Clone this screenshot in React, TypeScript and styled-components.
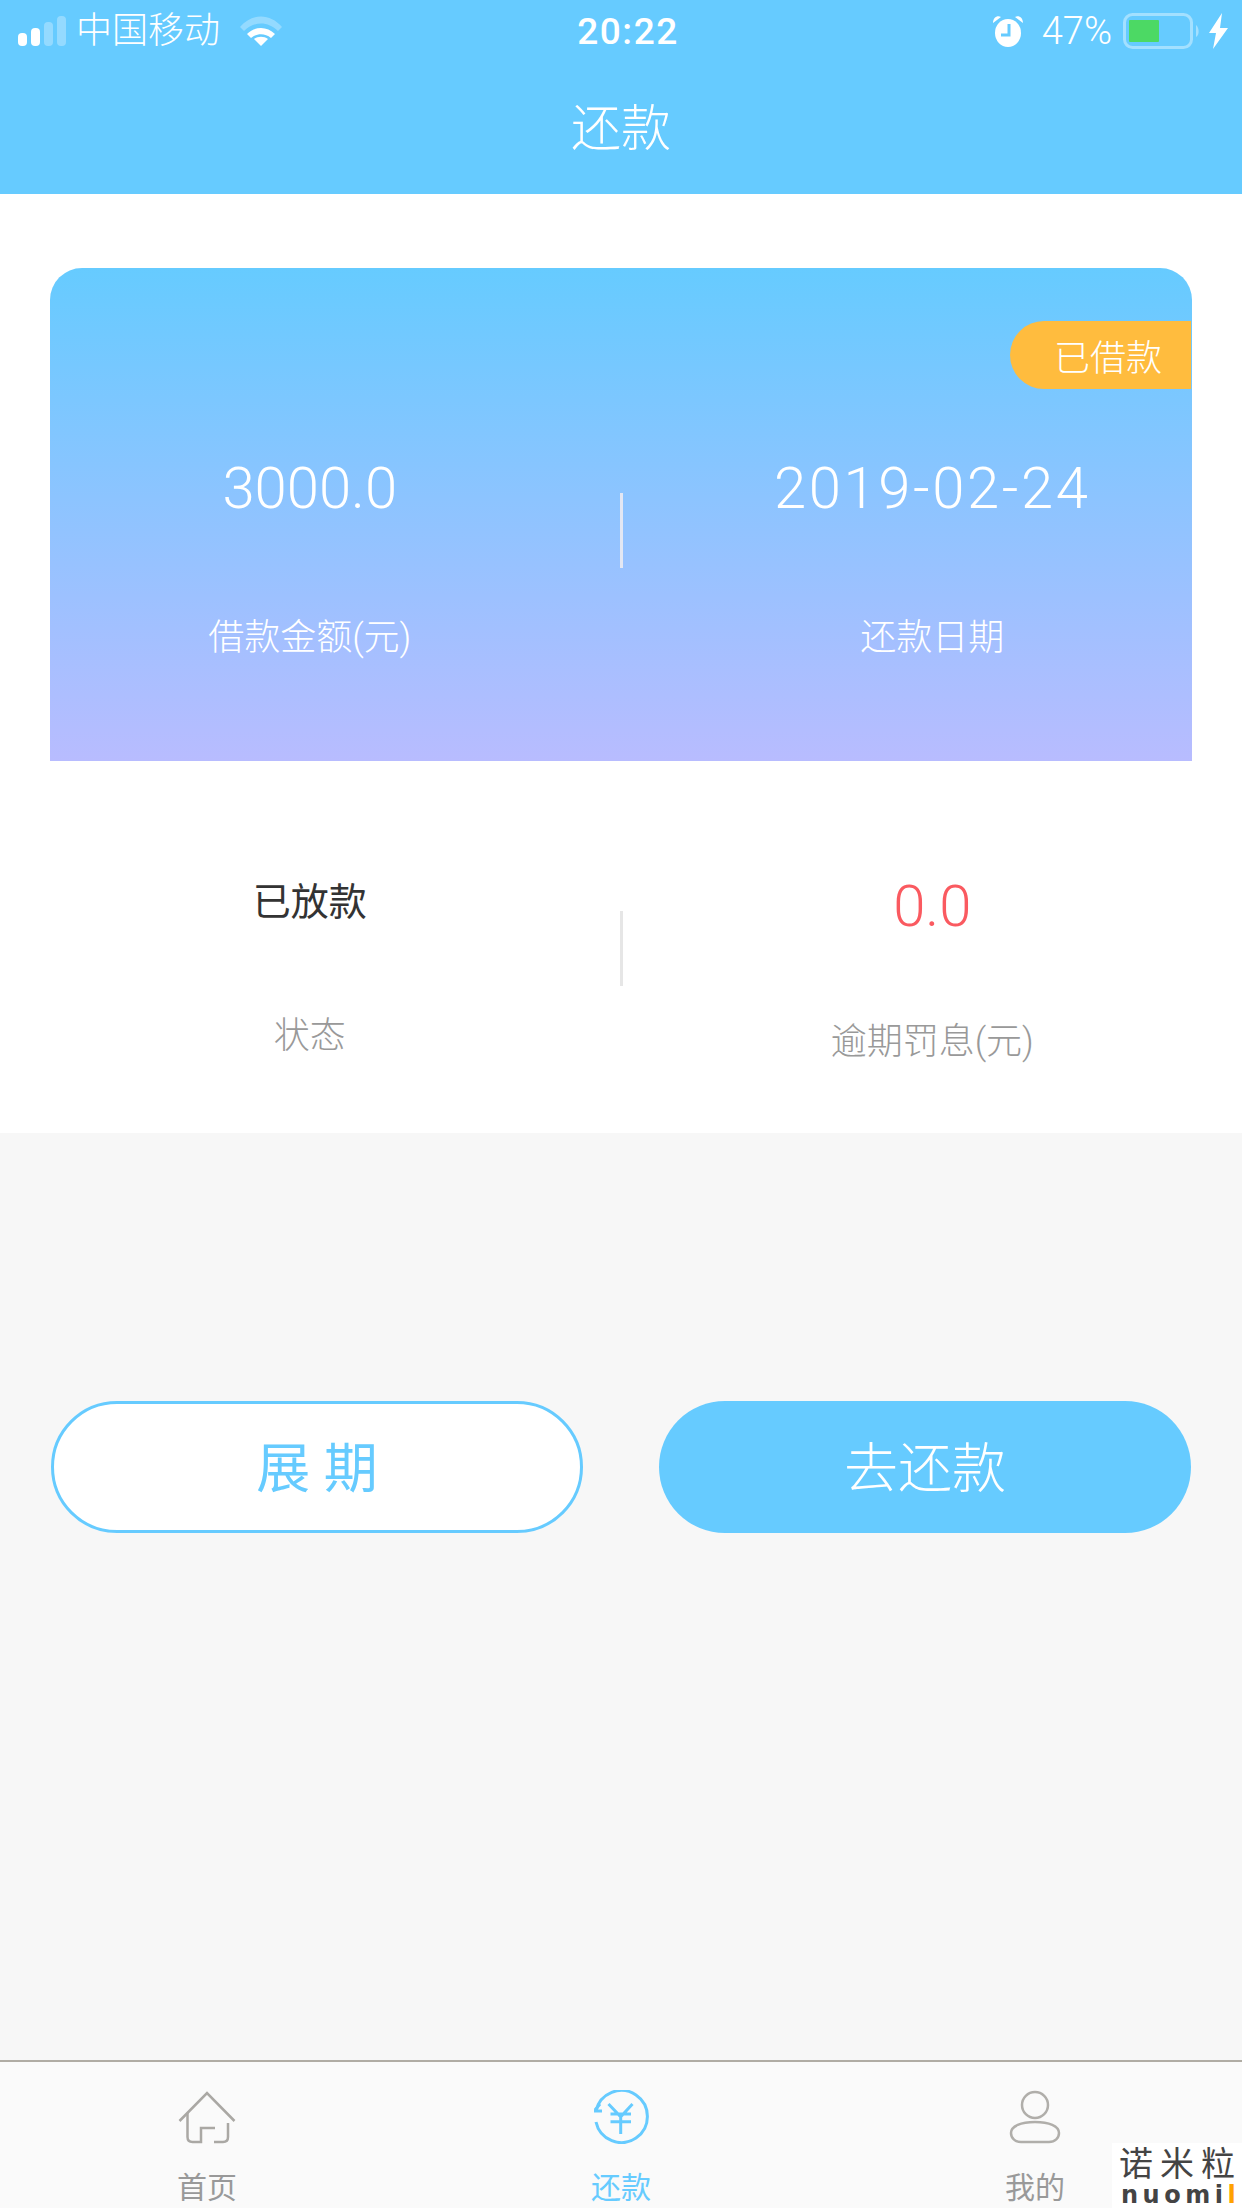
import React from "react";
import styled, { createGlobalStyle } from "styled-components";

const FONT = `Roboto, "Noto Sans CJK SC", "Liberation Sans", sans-serif`;
const BLUE = "#66cbff";

const Global = createGlobalStyle`
  html, body { margin: 0; padding: 0; background: #f7f7f7; }
  * { box-sizing: border-box; }
`;

const Page = styled.div`
  position: relative;
  width: 1242px;
  height: 2208px;
  display: flex;
  flex-direction: column;
  overflow: hidden;
  font-family: ${FONT};
  background: #f7f7f7;
`;

const Header = styled.header`
  height: 194px;
  background: ${BLUE};
  color: #fff;
  display: flex;
  flex-direction: column;
`;

const StatusBar = styled.div`
  height: 62px;
  padding: 0 14px 0 18px;
  display: grid;
  grid-template-columns: 1fr auto 1fr;
  align-items: center;
`;

const StatusLeft = styled.div`
  display: flex;
  align-items: center;
`;

const Carrier = styled.span`
  font-size: 36px;
  font-weight: 300;
  line-height: 44px;
  margin: 0 20px 0 10px;
`;

const Clock = styled.span`
  font-size: 37px;
  font-weight: 500;
  letter-spacing: 1.5px;
  padding-left: 10px;
`;

const StatusRight = styled.div`
  display: flex;
  align-items: center;
  justify-content: flex-end;
`;

const Percent = styled.span`
  font-size: 38px;
  font-weight: 300;
  margin: 0 11px 0 19px;
`;

const BoltWrap = styled.span`
  display: flex;
  margin-left: 9px;
`;

const Title = styled.h1`
  flex: 1;
  margin: 0;
  display: flex;
  align-items: center;
  justify-content: center;
  font-size: 50px;
  font-weight: 300;
  padding-bottom: 8px;
`;

const Main = styled.main`
  height: 939px;
  background: #fff;
  padding: 74px 50px 0;
`;

const Card = styled.section`
  position: relative;
  height: 493px;
  border-radius: 32px 32px 0 0;
  background: linear-gradient(180deg, #66cbff 0%, #b8bcff 100%);
`;

const Badge = styled.div`
  position: absolute;
  top: 53px;
  right: 1px;
  width: 181px;
  height: 68px;
  padding-left: 44px;
  display: flex;
  align-items: center;
  border-radius: 34px 0 0 34px;
  background: #ffbc3e;
  color: #fff;
  font-size: 36px;
  font-weight: 300;
`;

const StatsRow = styled.div<{ $top: number }>`
  display: grid;
  grid-template-columns: 1fr 3px 1fr;
  padding-top: ${(p) => p.$top}px;
`;

const Stat = styled.div<{ $side: "left" | "right"; $offset?: number }>`
  display: flex;
  flex-direction: column;
  align-items: center;
  padding-top: ${(p) => p.$offset ?? 0}px;
  ${(p) => (p.$side === "left" ? "padding-right: 50px;" : "padding-left: 50px;")}
`;

const Value = styled.div<{ $color: string; $size: number; $weight?: number; $spacing?: number }>`
  height: 60px;
  line-height: 60px;
  color: ${(p) => p.$color};
  font-size: ${(p) => p.$size}px;
  font-weight: ${(p) => p.$weight ?? 300};
  letter-spacing: ${(p) => p.$spacing ?? 0}px;
`;

const Label = styled.div<{ $color: string; $gap: number }>`
  height: 60px;
  line-height: 60px;
  margin-top: ${(p) => p.$gap}px;
  color: ${(p) => p.$color};
  font-size: 36px;
  font-weight: 300;
`;

const Divider = styled.div<{ $color: string; $top: number }>`
  width: 3px;
  height: 75px;
  margin-top: ${(p) => p.$top}px;
  background: ${(p) => p.$color};
`;

const Gray = styled.div`
  flex: 1;
  padding: 268px 51px 0;
`;

const Actions = styled.div`
  display: grid;
  grid-template-columns: 1fr 1fr;
  gap: 76px;
`;

const ActionButton = styled.button<{ $primary?: boolean }>`
  height: 132px;
  border-radius: 66px;
  border: ${(p) => (p.$primary ? "0" : `3px solid ${BLUE}`)};
  background: ${(p) => (p.$primary ? BLUE : "#fff")};
  color: ${(p) => (p.$primary ? "#fff" : BLUE)};
  font-family: ${FONT};
  font-size: 54px;
  font-weight: ${(p) => (p.$primary ? 300 : 400)};
  padding: 0 0 5px;
`;

const TabBar = styled.nav`
  height: 148px;
  display: flex;
  background: #fafafa;
  border-top: 2px solid #b0aca4;
`;

const Tab = styled.div<{ $active?: boolean }>`
  flex: 1;
  display: flex;
  flex-direction: column;
  align-items: center;
  padding-top: 28px;
  color: ${(p) => (p.$active ? BLUE : "#999")};
`;

const TabIcon = styled.div`
  height: 54px;
  display: flex;
`;

const TabLabel = styled.span`
  margin-top: 26px;
  font-size: 30px;
  line-height: 36px;
`;

const Watermark = styled.div`
  position: absolute;
  right: 0;
  bottom: 0;
  width: 130px;
  height: 65px;
  background: #fff;
  padding: 2px 0 0 7px;
  color: #444;
`;

const WatermarkCn = styled.div`
  font-size: 34px;
  line-height: 38px;
  letter-spacing: 7px;
  white-space: nowrap;
  font-weight: 400;
`;

const WatermarkEn = styled.div`
  margin-left: 2px;
  font-family: "DejaVu Sans", sans-serif;
  font-weight: 700;
  font-size: 24px;
  line-height: 24px;
  letter-spacing: 4.5px;
  white-space: nowrap;
`;

const Accent = styled.span`
  color: #ffa200;
`;

const Signal = () => (
  <svg width="48" height="30" viewBox="0 0 48 30">
    <rect x="0" y="17" width="9" height="13" rx="4" fill="#fff" />
    <rect x="13" y="12" width="9" height="18" rx="4" fill="#fff" />
    <rect x="26" y="6" width="9" height="24" rx="4" fill="#fff" fillOpacity=".3" />
    <rect x="39" y="0" width="9" height="30" rx="4" fill="#fff" fillOpacity=".3" />
  </svg>
);

const Wifi = () => (
  <svg width="42" height="30" viewBox="0 0 42 30">
    <path d="M0 11 C12 -3 30 -3 42 11 L38 15 C28 5 14 5 4 15 Z" fill="#fff" fillOpacity=".3" />
    <path d="M7 18 C15 10 27 10 35 18 L31 22 C25 17 17 17 11 22 Z" fill="#fff" />
    <path d="M14 23 C18 20 24 20 28 23 L21 30 Z" fill="#fff" />
  </svg>
);

const Alarm = () => (
  <svg width="30" height="32" viewBox="0 0 30 32">
    <ellipse cx="15" cy="18" rx="13" ry="14" fill="#fff" />
    <path d="M0 8 C0 3 4 0 8 2 Z M30 8 C30 3 26 0 22 2 Z" fill="#fff" />
    <path d="M16 9 V20 H8" fill="none" stroke={BLUE} strokeWidth="3" />
  </svg>
);

const Battery = () => (
  <svg width="77" height="36" viewBox="0 0 77 36">
    <rect x="1.5" y="1.5" width="67" height="33" rx="8" fill="none" stroke="#fff" strokeOpacity=".4" strokeWidth="3" />
    <rect x="6" y="7" width="30" height="22" rx="1" fill="#4cd964" />
    <path d="M73 12 C76 14 77 22 73 24 Z" fill="#fff" fillOpacity=".4" />
  </svg>
);

const Bolt = () => (
  <svg width="19" height="36" viewBox="0 0 19 36">
    <path d="M13 0 L0 20 H7 L4 36 L19 15 H11 Z" fill="#fff" />
  </svg>
);

const HomeIcon = () => (
  <svg width="58" height="54" viewBox="0 0 58 54" fill="none" stroke="#aaa8a4" strokeWidth="2.5">
    <path d="M1.5 31 L29 3 L56.5 31" />
    <path d="M9.5 23 V47 Q9.5 52 14.5 52 H23 V38 H37" />
    <path d="M36 52 H45 Q50 52 50 47 V33" />
  </svg>
);

const RepayIcon = () => (
  <svg width="56" height="54" viewBox="0 0 56 54" fill="none" stroke={BLUE} strokeWidth="3">
    <path d="M3 21 A26 26 0 1 1 3 32" />
    <path d="M1 21 H9 M2 20 L7 14" />
    <path d="M15.5 14 L27.7 26.7 L39.5 14 M17.5 24 H38 M17.5 31.7 H38 M27.7 26.7 V44" />
  </svg>
);

const UserIcon = () => (
  <svg width="52" height="54" viewBox="0 0 52 54" fill="none" stroke="#b0aeaa" strokeWidth="2.5">
    <circle cx="26" cy="15" r="13" />
    <path d="M12 52 H40 C46 52 50 48 50 43 C50 36 40 32 26 32 C12 32 2 36 2 43 C2 48 6 52 12 52 Z" />
  </svg>
);

export default function App() {
  return (
    <Page>
      <Global />
      <Header>
        <StatusBar>
          <StatusLeft>
            <Signal />
            <Carrier>中国移动</Carrier>
            <Wifi />
          </StatusLeft>
          <Clock>20:22</Clock>
          <StatusRight>
            <Alarm />
            <Percent>47%</Percent>
            <Battery />
            <BoltWrap>
              <Bolt />
            </BoltWrap>
          </StatusRight>
        </StatusBar>
        <Title>还款</Title>
      </Header>

      <Main>
        <Card>
          <Badge>已借款</Badge>
          <StatsRow $top={190}>
            <Stat $side="left">
              <Value $color="#fff" $size={58}>3000.0</Value>
              <Label $color="#fff" $gap={90}>借款金额(元)</Label>
            </Stat>
            <Divider $color="#e3e7f3" $top={35} />
            <Stat $side="right">
              <Value $color="#fff" $size={58} $spacing={2.6}>2019-02-24</Value>
              <Label $color="#fff" $gap={90}>还款日期</Label>
            </Stat>
          </StatsRow>
        </Card>
        <StatsRow $top={111}>
          <Stat $side="left">
            <Value $color="#333" $size={38} $weight={400}>已放款</Value>
            <Label $color="#999" $gap={74}>状态</Label>
          </Stat>
          <Divider $color="#e6e6e6" $top={39} />
          <Stat $side="right" $offset={4}>
            <Value $color="#fa5a60" $size={58}>0.0</Value>
            <Label $color="#999" $gap={76}>逾期罚息(元)</Label>
          </Stat>
        </StatsRow>
      </Main>

      <Gray>
        <Actions>
          <ActionButton>展 期</ActionButton>
          <ActionButton $primary>去还款</ActionButton>
        </Actions>
      </Gray>

      <TabBar>
        <Tab>
          <TabIcon><HomeIcon /></TabIcon>
          <TabLabel>首页</TabLabel>
        </Tab>
        <Tab $active>
          <TabIcon><RepayIcon /></TabIcon>
          <TabLabel>还款</TabLabel>
        </Tab>
        <Tab>
          <TabIcon><UserIcon /></TabIcon>
          <TabLabel>我的</TabLabel>
        </Tab>
      </TabBar>

      <Watermark>
        <WatermarkCn>诺米粒</WatermarkCn>
        <WatermarkEn>nuomi<Accent>l</Accent></WatermarkEn>
      </Watermark>
    </Page>
  );
}
